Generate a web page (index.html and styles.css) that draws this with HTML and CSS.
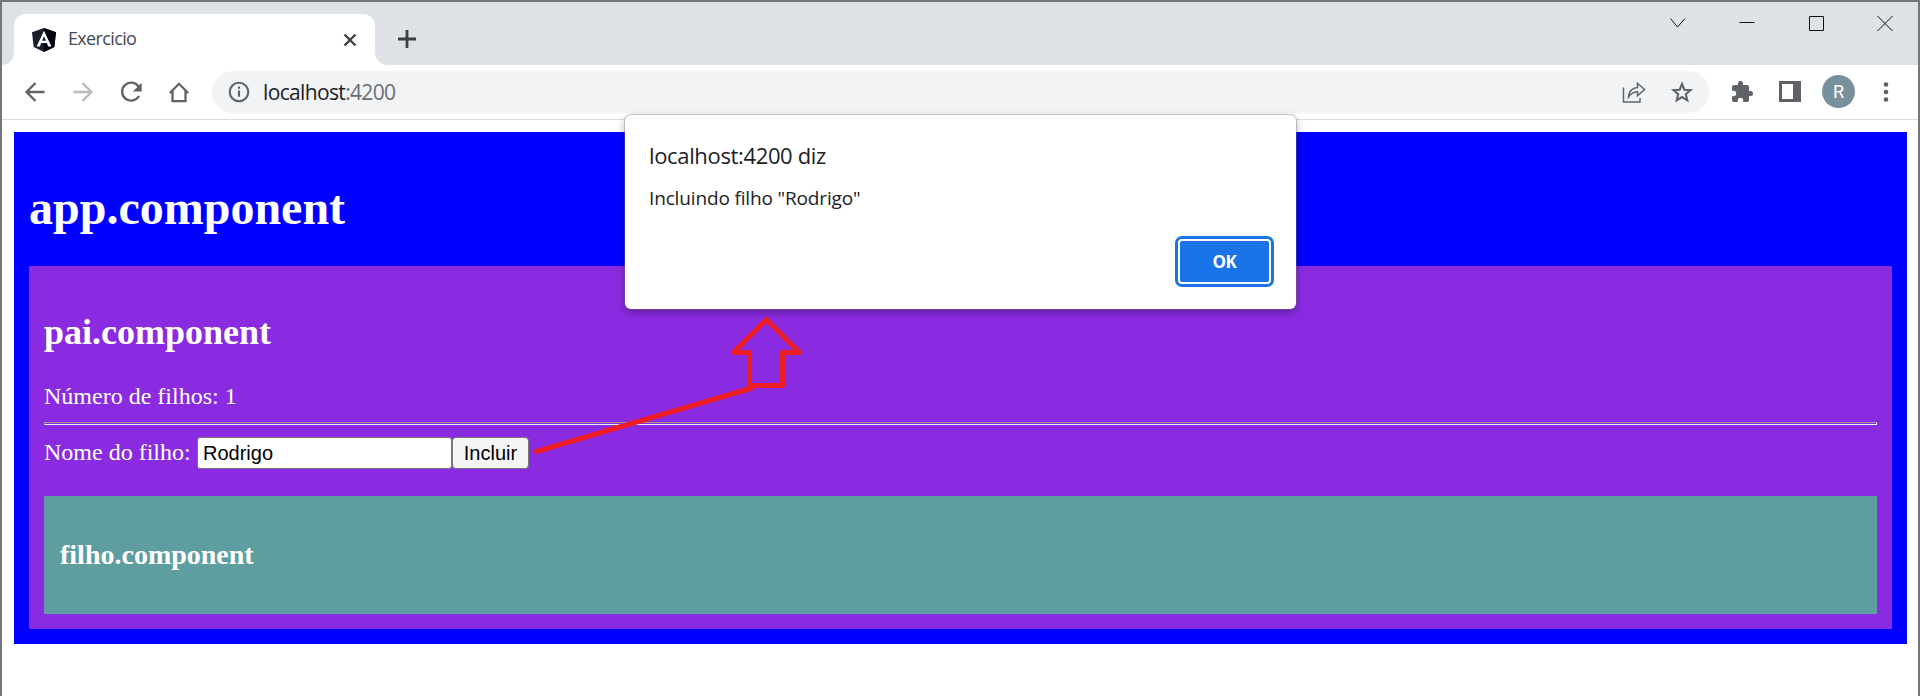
FILE: index.html
```html
<!DOCTYPE html>
<html lang="pt">
<head>
<meta charset="utf-8">
<title>Exercicio</title>
<link rel="stylesheet" href="styles.css">
</head>
<body>
<div class="window">
  <header class="tabstrip">
    <div class="tab">
      <svg class="favicon" width="24" height="24" viewBox="0 0 24 24"><path fill="#1a1e2c" d="M12 0 24 4.300 22.300 19 12 24 1.700 19 0 4.300z"/><path fill="#02040f" d="M12 0 24 4.300 22.300 19 12 24z"/><path fill="#fff" fill-rule="evenodd" d="M12 2.800 4.600 18.600h3.200l1.400-3.500h5.600l1.400 3.500h3.200zM12 8.300l1.900 4.500h-3.800z"/></svg>
      <span class="tab-title">Exercicio</span>
      <svg class="tab-close" width="14" height="14" viewBox="0 0 14 14" stroke="#3c4043" stroke-width="2.400"><path d="M1.500 1.500l11 11M12.500 1.500l-11 11"/></svg>
    </div>
    <svg class="new-tab" width="18" height="18" viewBox="0 0 18 18" stroke="#3c4043" stroke-width="2.800"><path d="M9 0v18M0 9h18"/></svg>
    <div class="controls">
      <svg width="16" height="16" viewBox="0 0 16 16"><path d="M.500 3.500 7.500 12 15 3.500"/></svg>
      <svg width="16" height="16" viewBox="0 0 16 16"><path d="M.500 7.500h15"/></svg>
      <svg width="16" height="16" viewBox="0 0 16 16"><path d="M1.500 1.500h14v14h-14z"/></svg>
      <svg width="16" height="16" viewBox="0 0 16 16"><path d="M.500 1l15 15M15.500 1l-15 15"/></svg>
    </div>
  </header>
  <nav class="toolbar">
    <div class="nav-icons">
      <svg width="24" height="24" viewBox="0 0 24 24"><path d="M21.500 12H3.500M12.500 3l-9 9 9 9"/></svg>
      <svg class="off" width="24" height="24" viewBox="0 0 24 24"><path d="M2.500 12h18M11.500 3l9 9-9 9"/></svg>
      <svg width="24" height="24" viewBox="0 0 24 24"><path d="M20 16a9 9 0 1 1-.500-9.500"/><path fill="#5f6368" stroke="none" d="M22.700 2.700v8.800h-8.800z"/></svg>
      <svg width="24" height="24" viewBox="0 0 24 24"><path d="M2.800 13 12 3.800 21.200 13M5.500 11v10.200h13V11"/></svg>
    </div>
    <div class="omnibox">
      <svg width="22" height="22" viewBox="0 0 22 22"><circle cx="11" cy="11" r="9.300"/><path d="M11 9.500v6.200M11 5.500v2.300"/></svg>
      <span class="url">localhost<span class="port">:4200</span></span>
      <svg class="share" width="24" height="24" viewBox="0 0 24 24"><path d="M1.500 7.500V22h16.500V18M6.500 17c.500-6 3.500-9 9-9.500V3.300l7 6.200-7 6.300v-4c-4 .200-6.500 1.700-9 5.200z"/></svg>
      <svg width="24" height="24" viewBox="0 0 24 24"><path d="M12 4l2.300 5.700 6.200.500-4.700 4 1.500 6.100L12 17l-5.300 3.300 1.500-6.100-4.700-4 6.200-.500z"/></svg>
    </div>
    <div class="actions">
      <svg width="24" height="24" viewBox="0 0 24 24"><path fill="#5f6368" stroke="none" d="M20.500 11H19V7a2 2 0 0 0-2-2h-4V3.500a2.500 2.500 0 0 0-5 0V5H4a2 2 0 0 0-2 2v3.800h1.500a2.700 2.700 0 0 1 0 5.400H2V20a2 2 0 0 0 2 2h3.800v-1.500a2.700 2.700 0 0 1 5.400 0V22H17a2 2 0 0 0 2-2v-4h1.500a2.500 2.500 0 0 0 0-5z"/></svg>
      <svg width="22" height="21" viewBox="0 0 22 21"><path fill="#5f6368" stroke="none" fill-rule="evenodd" d="M0 0h22v21H0zM3 3v15h11V3z"/></svg>
      <span class="avatar">R</span>
      <svg width="6" height="20" viewBox="0 0 6 20"><g fill="#5f6368" stroke="none"><circle cx="3" cy="2.500" r="2.300"/><circle cx="3" cy="10" r="2.300"/><circle cx="3" cy="17.500" r="2.300"/></g></svg>
    </div>
  </nav>
  <main class="page">
    <section class="app">
      <h1>app.component</h1>
      <section class="pai">
        <h2>pai.component</h2>
        <div class="count">Número de filhos: 1</div>
        <hr>
        <div class="form"><label for="nome">Nome do filho:</label><input id="nome" class="nome" value="Rodrigo"><button class="incluir">Incluir</button></div>
        <section class="filho"><h3>filho.component</h3></section>
      </section>
    </section>
  </main>
  <div class="dialog">
    <div class="dialog-title">localhost:4200 diz</div>
    <div class="dialog-text">Incluindo filho "Rodrigo"</div>
    <button class="ok">OK</button>
  </div>
  <svg class="pointer" width="300" height="170" viewBox="0 0 300 170"><path d="M16.500 151.500 232 88M246.500 19.500 213.500 52.500H229.500V85.500H262.500V52.500H279.500z"/></svg>
</div>
</body>
</html>
```
FILE: styles.css
```css
* { box-sizing: border-box; }
body { margin: 0; background: #fff; }
svg { display: block; fill: none; flex: none; }
.window { position: relative; height: 696px; overflow: hidden; border: 2px solid #767676; border-bottom: 0; font-family: "Open Sans", "Noto Sans", sans-serif; }
.tabstrip { height: 63px; background: #dee1e6; display: flex; align-items: flex-start; }
.tab { position: relative; width: 361px; height: 51px; margin: 12px 0 0 12px; padding: 0 18px; background: #fff; border-radius: 12px 12px 0 0; display: flex; align-items: center; }
.tab::before, .tab::after { content: ""; position: absolute; bottom: 0; width: 12px; height: 12px; }
.tab::before { left: -12px; background: radial-gradient(circle at 0 0, #dee1e6 11.5px, #fff 12px); }
.tab::after { right: -12px; background: radial-gradient(circle at 100% 0, #dee1e6 11.5px, #fff 12px); }
.tab-title { margin: 0 0 3px 12px; font-size: 18px; letter-spacing: -.65px; color: #45494d; line-height: 24px; }
.tab-close { margin-left: auto; }
.new-tab { margin: 28px 0 0 23px; }
.controls { margin: 13px 25px 0 auto; display: flex; gap: 53px; stroke: #111; stroke-width: 1; }
.toolbar { height: 55px; border-bottom: 1px solid #dadce0; display: flex; align-items: center; padding: 0 29px 1px 21px; }
.nav-icons { display: flex; gap: 24px; stroke: #5f6368; stroke-width: 2.3; }
.nav-icons .off { stroke: #babcbe; }
.omnibox { width: 1497px; height: 42px; margin-left: 21px; padding: 0 15px 0 16px; border-radius: 21px; background: #f1f3f4; display: flex; align-items: center; stroke: #5f6368; stroke-width: 2.1; }
.url { margin-left: 13px; font-size: 21px; line-height: 30px; letter-spacing: -.65px; color: #202124; }
.port { color: #6a6e73; }
.share { margin: 0 24px 0 auto; stroke-width: 1.5; }
.actions { margin-left: auto; display: flex; align-items: center; }
.actions svg:nth-child(2) { margin: 0 21px 0 25px; }
.avatar { width: 33px; height: 33px; margin-right: 28px; border-radius: 50%; background: #78909c; color: #fff; font: 18px/34px Roboto, sans-serif; text-align: center; }
.page { padding: 12px 11px 0 12px; font-family: "Liberation Serif", serif; font-size: 24px; color: #fff; }
.app { height: 512px; padding: 15px; background: #00f; }
h1 { margin: 33px 0 31px; font-size: 48px; line-height: 55px; }
.pai { height: 363px; padding: 15px; background: #8a2be2; }
h2 { margin: 31px 0 30px; font-size: 36px; line-height: 41px; }
.count { line-height: 27px; }
hr { margin: 12px 0 12px; height: 3px; border: 1px solid; border-color: #9a9a9a #eee #eee #9a9a9a; }
.form { display: flex; align-items: center; height: 32px; }
.form label { width: 153px; padding-bottom: 2px; line-height: 28px; }
.nome { width: 255px; height: 32px; padding: 0 4px 0 5px; border: 1.5px solid #767676; border-radius: 3px; background: #fff; color: #000; font: 20px "Liberation Sans", sans-serif; }
.incluir { width: 77px; height: 32px; padding: 0; border: 1.5px solid #767676; border-radius: 4px; background: #f5f5f5; color: #000; font: 20px "Liberation Sans", sans-serif; }
.filho { height: 118px; margin-top: 27px; padding: 15px 16px; background: #5f9ea0; }
h3 { margin: 28px 0; font-size: 28px; line-height: 32px; }
.dialog { position: absolute; left: 623px; top: 113px; width: 671px; height: 194px; padding: 24px 24px; border-radius: 6px; background: #fff; color: #202124; box-shadow: 0 0 0 1px rgba(120,120,130,.35), 0 3px 8px rgba(0,0,0,.35); }
.dialog-title { font-size: 22px; line-height: 32px; letter-spacing: -.35px; }
.dialog-text { margin-top: 14px; font-size: 19px; line-height: 26px; letter-spacing: -.15px; }
.ok { display: block; width: 93px; height: 45px; margin: 28px 1px 0 auto; padding: 0; border: 2px solid #fff; border-radius: 4px; outline: 3px solid #1a73e8; background: #1a73e8; color: #fff; font: 700 17px "Open Sans", sans-serif; letter-spacing: -.3px; }
.pointer { position: absolute; left: 518px; top: 298px; stroke: #ed1c24; stroke-width: 5; stroke-linecap: round; stroke-linejoin: round; }
```
